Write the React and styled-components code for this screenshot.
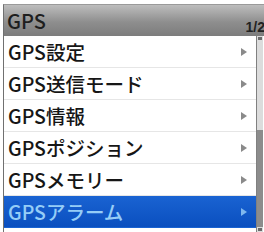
import React from 'react'
import styled, { createGlobalStyle } from 'styled-components'

const Global = createGlobalStyle`
  html, body {
    margin: 0;
    padding: 0;
    background: #ffffff;
    overflow: hidden;
  }
  body {
    font-family: "Noto Sans CJK JP", "Noto Sans", sans-serif;
  }
`

const Frame = styled.div`
  margin: 4px 0 0 3px;
  width: 261px;
  border-left: 1px solid #707070;
  border-top: 1px solid #9a9a9a;
  display: flex;
  flex-direction: column;
`

const Header = styled.div`
  height: 31px;
  background: linear-gradient(#bdbdbd, #8e8e8e 55%, #7c7c7c);
  display: flex;
  align-items: center;
  justify-content: space-between;
  padding-left: 3px;
  box-sizing: border-box;
`

const Title = styled.span`
  font-size: 20px;
  font-weight: 500;
  line-height: 1;
  color: #1e1e1e;
  margin-top: 1px;
`

const Page = styled.span`
  align-self: flex-end;
  font-size: 14px;
  font-weight: bold;
  font-family: "Liberation Sans", sans-serif;
  color: #222;
  margin-right: 0;
  margin-bottom: 1px;
`

const Body = styled.div`
  display: flex;
`

const List = styled.div`
  width: 252px;
  display: flex;
  flex-direction: column;
`

const Row = styled.div`
  height: 32px;
  box-sizing: border-box;
  display: flex;
  align-items: center;
  justify-content: space-between;
  padding: 0 4px 0 4px;
  background: ${p => (p.$active ? 'linear-gradient(#1a63d2, #0a4fbf)' : '#ffffff')};
  border-bottom: 1px solid ${p => (p.$active ? 'transparent' : '#e6e6e6')};
  color: ${p => (p.$active ? '#95cdf7' : '#161616')};
`

const Label = styled.span`
  font-size: 19.5px;
  font-weight: 500;
  line-height: 1;
  letter-spacing: 0;
`

const Arrow = styled.span`
  width: 0;
  height: 0;
  margin-right: 5px;
  border-top: 4.5px solid transparent;
  border-bottom: 4.5px solid transparent;
  border-left: 6px solid ${p => (p.$active ? '#7fb8ee' : '#8a8a8a')};
`

const Scroll = styled.div`
  width: 6px;
  border-left: 1px solid #808080;
  display: flex;
  flex-direction: column;
  background: #dcdcdc;
`

const Notch = styled.div`
  height: 3px;
  background: #6a6a6a;
  margin: 1px 1px;
`

const Track = styled.div`
  height: ${p => p.$h}px;
  background: ${p => (p.$thumb ? '#8c8c8c' : '#dcdcdc')};
`

const items = ['GPS設定', 'GPS送信モード', 'GPS情報', 'GPSポジション', 'GPSメモリー', 'GPSアラーム']

export default function App() {
  return (
    <>
      <Global />
      <Frame>
        <Header>
          <Title>GPS</Title>
          <Page>1/2</Page>
        </Header>
        <Body>
          <List>
            {items.map((t, i) => (
              <Row key={t} $active={i === items.length - 1}>
                <Label>{t}</Label>
                <Arrow $active={i === items.length - 1} />
              </Row>
            ))}
          </List>
          <Scroll>
            <Notch />
            <Track $h={89} />
            <Track $h={97} $thumb />
            <Notch />
          </Scroll>
        </Body>
      </Frame>
    </>
  )
}
